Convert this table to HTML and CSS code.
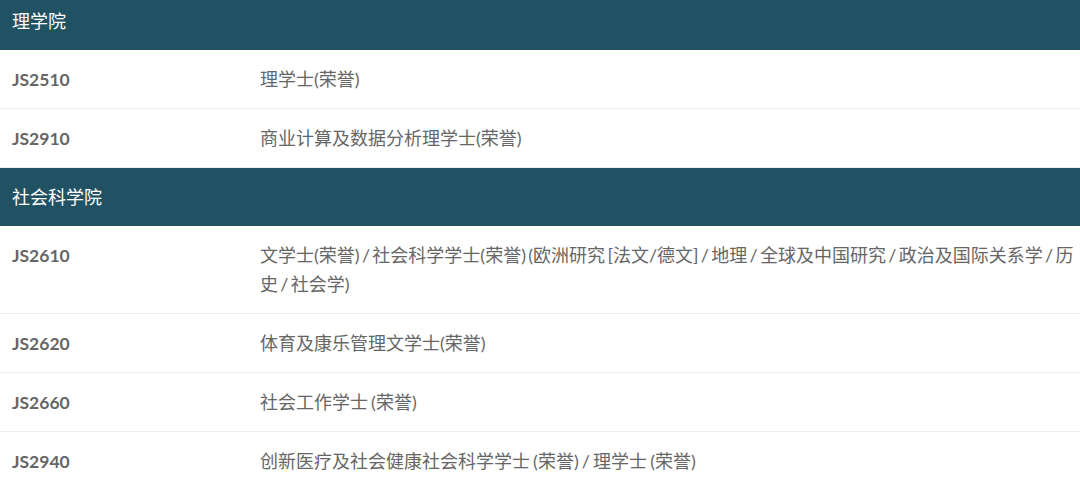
FILE: index.html
```html
<!DOCTYPE html>
<html lang="zh-CN">
<head>
  <meta charset="UTF-8" />
  <meta name="viewport" content="width=device-width, initial-scale=1.0" />
  <title>课程列表</title>
  <link rel="stylesheet" href="styles.css">
</head>
<body>
  <table class="programmes">
    <tbody>
      <tr class="faculty"><th colspan="2">理学院</th></tr>
      <tr>
        <td class="code">JS2510</td>
        <td class="name">理学士(荣誉)</td>
      </tr>
      <tr>
        <td class="code">JS2910</td>
        <td class="name">商业计算及数据分析理学士(荣誉)</td>
      </tr>
      <tr class="faculty"><th colspan="2">社会科学院</th></tr>
      <tr>
        <td class="code">JS2610</td>
        <td class="name long">文学士(荣誉) / 社会科学学士(荣誉) (欧洲研究 [法文/德文] / 地理 / 全球及中国研究 / 政治及国际关系学 / 历史 / 社会学)</td>
      </tr>
      <tr>
        <td class="code">JS2620</td>
        <td class="name">体育及康乐管理文学士(荣誉)</td>
      </tr>
      <tr>
        <td class="code">JS2660</td>
        <td class="name">社会工作学士 (荣誉)</td>
      </tr>
      <tr>
        <td class="code">JS2940</td>
        <td class="name">创新医疗及社会健康社会科学学士 (荣誉) / 理学士 (荣誉)</td>
      </tr>
    </tbody>
  </table>
</body>
</html>
```

FILE: styles.css
```css
html, body {
  margin: 0;
  padding: 0;
  background: #fff;
}
body {
  font-family: Lato, "Noto Sans CJK SC", sans-serif;
  font-size: 18px;
  color: #666;
  overflow: hidden;
}
.programmes {
  width: 1080px;
  border-collapse: collapse;
  margin-top: -8px;
}
.programmes td {
  padding: 15px 12px 14px;
  line-height: 29px;
  vertical-align: top;
  border-bottom: 1px solid #eeeeee;
}
.faculty th {
  background: #215263;
  color: #fff;
  font-weight: normal;
  text-align: left;
  padding: 15px 12px 14px;
  line-height: 29px;
}
.code {
  width: 224px;
  font-size: 17.5px;
  font-weight: bold;
}
.name {
  padding-right: 0 !important;
  word-spacing: -1.5px;
}
.long {
  word-spacing: -2.3px;
}
```
